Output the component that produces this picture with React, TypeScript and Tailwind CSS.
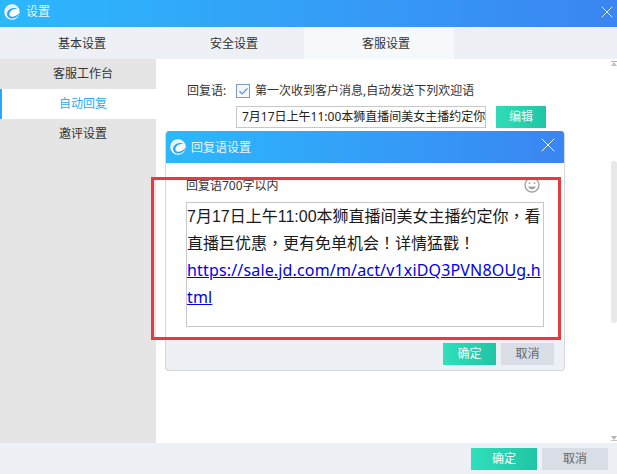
import { Check, X } from "lucide-react";

const cjk = "font-['Noto_Sans','Noto_Sans_CJK_SC',sans-serif]";

function Logo({ size }: { size: number }) {
  return (
    <svg width={size} height={size} viewBox="0 0 24 24" className="shrink-0">
      <circle cx="12" cy="12" r="11.500" fill="#ffffff" />
      <path d="M24 9C20 4 12 3 7 8c-3 3-3.500 7-2 10-4-4-3-11 2-14 6-3.500 13-1.500 17 5z" fill="#d8effd" />
      <path d="M6 19c-3-4-1-9 3-11.500 4-2.500 9-2 11.500.5-4-1-8 0-10.500 3-2 2.500-2.500 5-1 7 1.500 1.500 5 1.500 8 0 2.500-1.200 5-3 7-5-1.500 4-5 7.500-9.500 8.500-3.500.7-6.500 0-8.500-2.500z" fill="#2ea6f7" />
    </svg>
  );
}

function Smiley() {
  return (
    <svg width="16" height="16" viewBox="0 0 16 16" fill="none" stroke="#a3a3a3" strokeWidth="1.400">
      <circle cx="8" cy="8" r="7" />
      <circle cx="5.500" cy="6.200" r="0.900" fill="#a3a3a3" stroke="none" />
      <circle cx="10.500" cy="6.200" r="0.900" fill="#a3a3a3" stroke="none" />
      <path d="M4 9.500c1 2 2.500 3 4 3s3-1 4-3z" fill="#a3a3a3" stroke="none" />
    </svg>
  );
}

function Scrollbar() {
  return (
    <div className="w-[6px] shrink-0 flex flex-col items-center pt-[2px] pb-[1px]">
      <div className="w-[6px] h-[6px] flex flex-col items-center">
        <div className="w-[6px] h-px bg-[#b5b5b5]" />
        <div className="w-0 h-0 border-x-[3px] border-x-transparent border-b-[4px] border-b-[#c4c4c4]" />
      </div>
      <div className="w-[6px] h-[162px] mt-[94px] rounded-[3px] bg-[#e8e8e8]" />
      <div className="flex-1" />
      <div className="w-[6px] h-[6px] flex flex-col items-center">
        <div className="w-0 h-0 border-x-[3px] border-x-transparent border-t-[4px] border-t-[#b5b5b5]" />
        <div className="w-[6px] h-px bg-[#c4c4c4]" />
      </div>
    </div>
  );
}

export default function App() {
  return (
    <div className={`relative w-[617px] h-[474px] flex flex-col overflow-hidden bg-white ${cjk}`}>
      <div className="h-[27px] shrink-0 flex items-center pl-[4px] pb-[4px] bg-gradient-to-r from-[#2bb8fc] to-[#3a85f1]">
        <Logo size={16} />
        <span className="ml-[6px] text-[12px] text-[#e8f6ff]">设置</span>
        <X className="ml-auto" size={20} color="#ffffff" strokeWidth={1} />
      </div>

      <div className="h-[32px] shrink-0 flex bg-[#edf0f5] text-[12px] text-[#333333]">
        <div className="w-[152px] flex items-center justify-center pl-[12px] pt-[2px]">基本设置</div>
        <div className="w-[152px] flex items-center justify-center pl-[12px] pt-[2px]">安全设置</div>
        <div className="w-[150px] flex items-center justify-center pl-[14px] pt-[2px] bg-[#f6f9fc]">客服设置</div>
      </div>

      <div className="flex-1 flex min-h-0">
        <div className="w-[156px] shrink-0 bg-[#e5e5e5] text-[12px] text-[#333333]">
          <div className="h-[30px] flex items-center justify-center pl-[10px]">客服工作台</div>
          <div className="h-[30px] flex items-center justify-center pl-[8px] bg-white border-l-[2px] border-[#2aa8f5] text-[#2aaef5]">
            自动回复
          </div>
          <div className="h-[30px] flex items-center justify-center pl-[10px]">邀评设置</div>
        </div>

        <div className="flex-1 min-w-0 flex">
          <div className="flex-1 min-w-0 pl-[31px] pt-[23px] text-[12px] text-[#333333]">
            <div className="flex items-center h-[18px]">
              <span className="w-[49px]">回复语:</span>
              <span className="w-[14px] h-[14px] flex items-center justify-center border border-[#7f9db9] bg-[#f4f8fc]">
                <Check size={11} color="#5b8fdc" strokeWidth={2.500} />
              </span>
              <span className="ml-[5px] whitespace-nowrap">第一次收到客户消息,自动发送下列欢迎语</span>
            </div>
            <div className="flex items-center mt-[6px] ml-[49px]">
              <div className="w-[250px] h-[22px] flex items-center pl-[5px] border border-[#c8c8c8] overflow-hidden whitespace-nowrap text-[12px] text-[#222222]">
                7月17日上午11:00本狮直播间美女主播约定你
              </div>
              <button className="w-[50px] h-[22px] ml-[10px] text-[12px] text-[#e8fff8] bg-gradient-to-r from-[#30dcb8] to-[#20c5a5]">
                编辑
              </button>
            </div>
          </div>
          <Scrollbar />
        </div>
      </div>

      <div className="h-[31px] shrink-0 flex items-center justify-end pr-[9px] bg-[#edf1f6] text-[12px]">
        <button className="w-[66px] h-[22px] text-white bg-gradient-to-r from-[#30dfbb] to-[#1fc5a4]">确定</button>
        <button className="w-[66px] h-[22px] ml-[5px] text-[#666666] bg-[#d8dde6]">取消</button>
      </div>

      {/* dialog sits over the settings page */}
      <div className="absolute left-[165px] top-[131px] w-[400px] h-[240px] flex flex-col rounded-[4px] overflow-hidden border-x border-b border-[#d4d7db] bg-[#edf0f4]">
        <div className="h-[32px] shrink-0 flex items-center pl-[4px] pr-[4px] bg-gradient-to-r from-[#2bb8fc] to-[#3a85f1]">
          <Logo size={16} />
          <span className="ml-[5px] pt-[1px] text-[12px] text-[#e8f6ff]">回复语设置</span>
          <X className="ml-auto mt-[-4px]" size={24} color="#ffffff" strokeWidth={1} />
        </div>
        <div className="h-[177px] shrink-0 bg-white pl-[20px] pr-[20px]">
          <div className="h-[39px] pt-[15px] flex items-start justify-between">
            <span className="text-[12px] leading-[16px] text-[#333333]">回复语700字以内</span>
            <span className="mr-[4px] mt-[-1px]"><Smiley /></span>
          </div>
          <div className="w-[358px] h-[125px] border border-[#c8c8c8] text-[16px] leading-[26.700px] text-[#1a1a1a] break-all">
            <div className="pt-[1px] font-['Liberation_Sans','Noto_Sans_CJK_TC',sans-serif]">
              7月17日上午11:00本狮直播间美女主播约定你，看直播巨优惠，更有免单机会！详情猛戳！
              <a className="block text-[#0000ee] underline font-['Noto_Sans',sans-serif] tracking-[0.16px]">
                https://sale.jd.com/m/act/v1xiDQ3PVN8OUg.html
              </a>
            </div>
          </div>
        </div>
        <div className="flex-1 flex items-start justify-end pt-[3px] pr-[10px] text-[12px]">
          <button className="w-[53px] h-[22px] text-white bg-gradient-to-r from-[#30dfbb] to-[#1fc5a4]">确定</button>
          <button className="w-[53px] h-[22px] ml-[5px] text-[#666666] bg-[#d8dde6]">取消</button>
        </div>
      </div>

      {/* red annotation box drawn on top of the screenshot */}
      <div className="absolute left-[151px] top-[177px] w-[410px] h-[163px] border-[3px] border-[#e8393f]" />
    </div>
  );
}
